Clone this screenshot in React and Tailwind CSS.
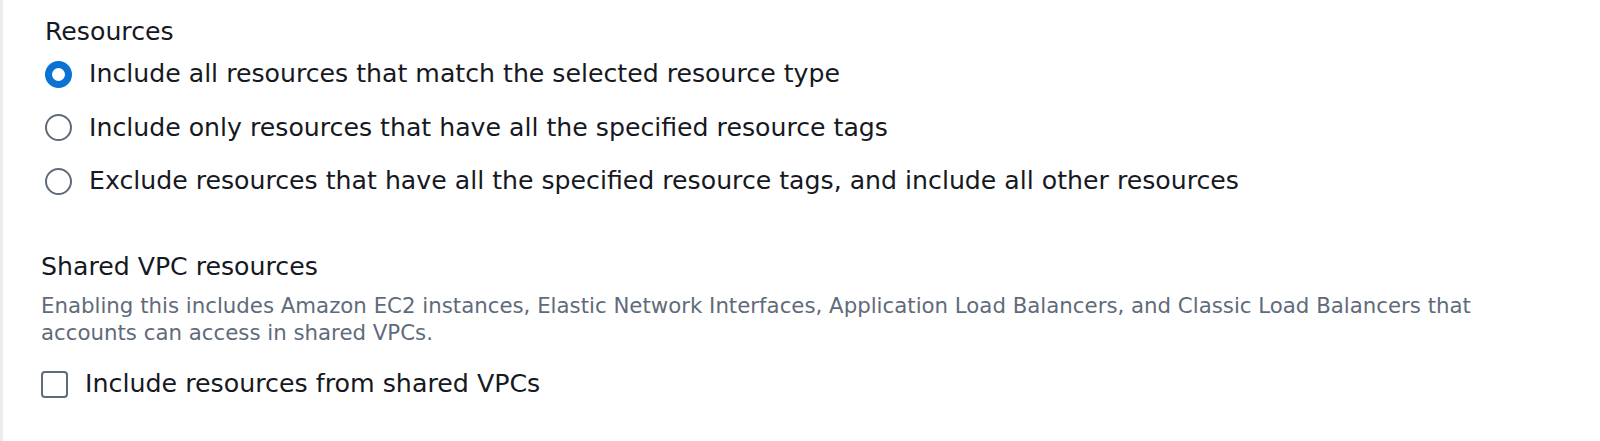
const options = [
  'Include all resources that match the selected resource type',
  'Include only resources that have all the specified resource tags',
  'Exclude resources that have all the specified resource tags, and include all other resources',
]

const Radio = ({ checked }) =>
  checked ? (
    <span className="w-[27px] h-[27px] rounded-full border-[7px] border-[#0972d3] bg-white shrink-0" />
  ) : (
    <span className="w-[27px] h-[27px] rounded-full border-2 border-[#5f6b7a] bg-white shrink-0" />
  )

export default function App() {
  const selected = 0
  return (
    <div className="w-[1600px] h-[441px] bg-white border-l-[3px] border-[#eaeded] font-['DejaVu_Sans',sans-serif] text-[#16191f]">
      <section className="flex flex-col pl-[42px] pt-[16px]">
        <div className="text-[25.2px] leading-[32px]">Resources</div>
        <div className="flex flex-col gap-[21.5px] mt-[10px]">
          {options.map((label, i) => (
            <label key={label} className="flex items-center gap-[17px] h-[32px] text-[25.2px] leading-[32px]">
              <Radio checked={i === selected} />
              <span className="whitespace-nowrap">{label}</span>
            </label>
          ))}
        </div>
      </section>

      <section className="flex flex-col pl-[38px] mt-[54px]">
        <div className="text-[25.2px] leading-[32px]">Shared VPC resources</div>
        <p className="text-[21.3px] leading-[27px] text-[#5f6b7a] mt-[9px] w-[1480px]">
          Enabling this includes Amazon EC2 instances, Elastic Network Interfaces, Application Load Balancers, and Classic Load Balancers that accounts can access in shared VPCs.
        </p>
        <label className="flex items-center gap-[17px] h-[32px] mt-[22px] text-[25.3px] leading-[32px]">
          <span className="w-[27px] h-[27px] rounded-[4px] border-2 border-[#5f6b7a] bg-white shrink-0" />
          <span>Include resources from shared VPCs</span>
        </label>
      </section>
    </div>
  )
}
